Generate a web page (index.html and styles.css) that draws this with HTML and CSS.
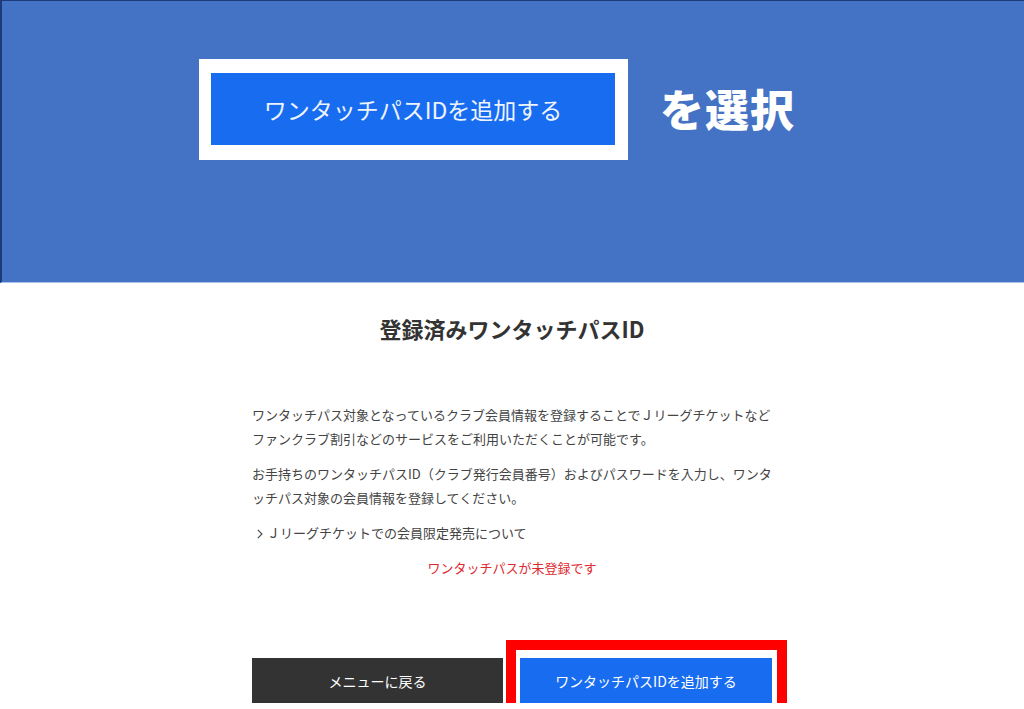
FILE: index.html
```html
<!DOCTYPE html>
<html lang="ja">
<head>
    <meta charset="UTF-8">
    <meta name="viewport" content="width=device-width, initial-scale=1.0">
    <title>登録済みワンタッチパスID</title>
    <link rel="stylesheet" href="styles.css">
</head>
<body>

<div class="banner">
    <div class="banner-row">
        <div class="banner-frame">
            <div class="banner-button">ワンタッチパスIDを追加する</div>
        </div>
        <div class="banner-label">を選択</div>
    </div>
</div>

<div class="container">
    <h1>登録済みワンタッチパスID</h1>

    <div class="intro">
        <p>ワンタッチパス対象となっているクラブ会員情報を登録することでＪリーグチケットなどファンクラブ割引などのサービスをご利用いただくことが可能です。</p>
        <p>お手持ちのワンタッチパスID（クラブ発行会員番号）およびパスワードを入力し、ワンタッチパス対象の会員情報を登録してください。</p>
        <p class="link"><svg class="chevron" width="6" height="10" viewBox="0 0 6 10"><path d="M0.8 0.8 L5 5 L0.8 9.2" fill="none" stroke="#444" stroke-width="1.1"/></svg>Ｊリーグチケットでの会員限定発売について</p>
    </div>

    <p class="notice">ワンタッチパスが未登録です</p>

    <div class="actions">
        <button class="btn btn-back">メニューに戻る</button>
        <div class="highlight">
            <button class="btn btn-add">ワンタッチパスIDを追加する</button>
        </div>
    </div>
</div>

</body>
</html>
```

FILE: styles.css
```css
body {
    font-family: "Noto Sans CJK JP", "Noto Sans", sans-serif;
    background-color: #fff;
    color: #333;
    margin: 0;
    padding: 0;
    overflow: hidden;
}
.banner {
    height: 283px;
    box-sizing: border-box;
    background-color: #4472c4;
    border-top: 1px solid #1d3b78;
    border-left: 2px solid #1d3b78;
    border-bottom: 1px solid #a9c4ea;
    padding: 58px 0 0 197px;
}
.banner-row {
    display: flex;
    align-items: center;
}
.banner-frame {
    background-color: #fff;
    padding: 14px 13px 15px 12px;
}
.banner-button {
    width: 404px;
    height: 72px;
    background-color: #176cf0;
    color: #eef4ff;
    font-size: 23px;
    display: flex;
    align-items: center;
    justify-content: center;
}
.banner-label {
    margin-left: 32px;
    margin-top: -4px;
    color: #fff;
    font-size: 44px;
    font-weight: 900;
    letter-spacing: 1px;
}
.container {
    width: 520px;
    margin: 0 auto;
    padding-top: 30px;
}
h1 {
    margin: 0;
    text-align: center;
    font-size: 22px;
    font-weight: bold;
    color: #333;
    line-height: 30px;
}
.intro {
    margin-top: 60px;
    font-size: 13px;
    line-height: 24px;
    color: #444;
    line-break: anywhere;
}
.intro p {
    margin: 0 0 11px;
}
.intro .link {
    margin: 0;
}
.chevron {
    margin: 0 4px 0 5px;
    vertical-align: -1px;
}
.notice {
    margin: 11px 0 0;
    text-align: center;
    font-size: 13px;
    line-height: 24px;
    color: #dc2a2f;
}
.actions {
    margin-top: 78px;
    display: flex;
    gap: 17px;
}
.btn {
    width: 252px;
    height: 45px;
    border: none;
    border-radius: 0;
    font-family: inherit;
    font-size: 14px;
    color: #fff;
    padding: 0;
}
.btn-back {
    background-color: #333;
}
.btn-add {
    background-color: #176cf0;
}
.highlight {
    position: relative;
}
.highlight::after {
    content: "";
    position: absolute;
    top: -18px;
    left: -14px;
    right: -15px;
    bottom: -30px;
    border: 10px solid #f00;
}
```
